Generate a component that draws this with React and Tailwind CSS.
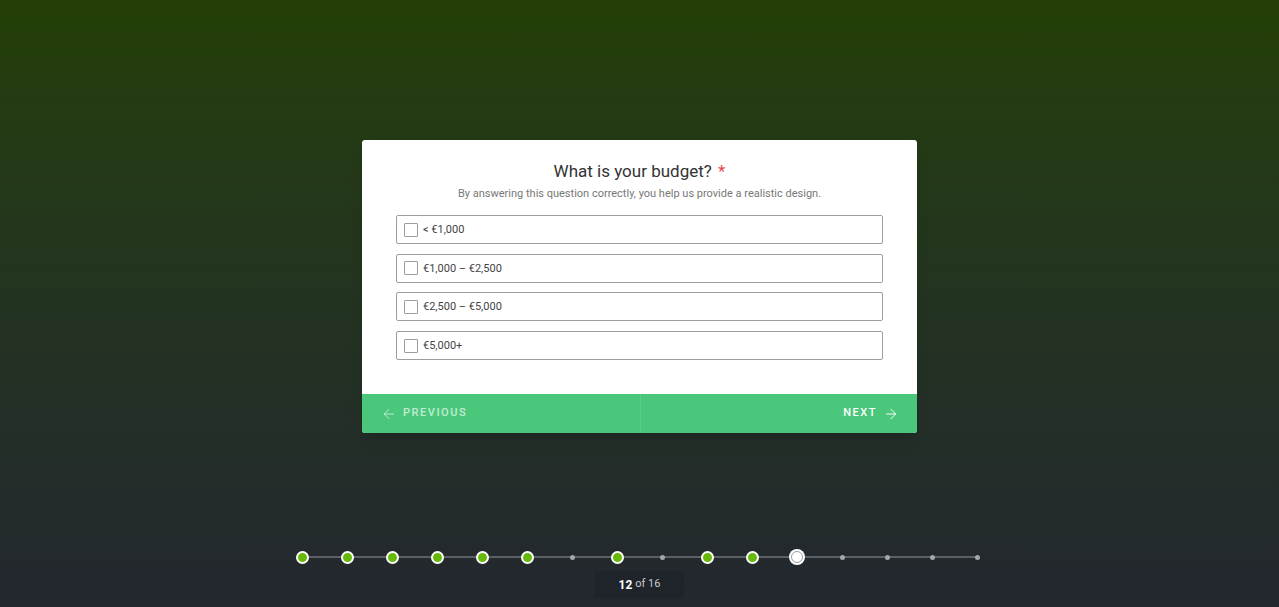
import { ArrowLeft, ArrowRight } from 'lucide-react';

const OPTIONS = ['< €1,000', '€1,000 – €2,500', '€2,500 – €5,000', '€5,000+'];

// 1 = done, 0 = skipped, 2 = current
const STEPS = [1, 1, 1, 1, 1, 1, 0, 1, 0, 1, 1, 2, 0, 0, 0, 0];

function Dot({ state }) {
  if (state === 1) {
    return <div className="w-[13px] h-[13px] rounded-full bg-[#66b908] border-2 border-white" />;
  }
  if (state === 2) {
    return (
      <div className="w-[16px] h-[16px] rounded-full bg-white p-[2px]">
        <div className="w-full h-full rounded-full border border-[#9a9a9a] bg-white" />
      </div>
    );
  }
  return <div className="w-[5px] h-[5px] rounded-full bg-[#a3a6aa]" />;
}

export default function App() {
  return (
    <div
      className="min-h-screen h-[607px] flex flex-col items-center bg-gradient-to-b from-[#243f05] to-[#23272f] overflow-hidden"
      style={{ fontFamily: 'Roboto, "Liberation Sans", sans-serif' }}
    >
      {/* Question card */}
      <div className="mt-[140px] w-[555px] bg-white rounded-[3px] shadow-lg overflow-hidden">
        <div className="px-[34px] pt-[19px] pb-[34px]">
          <h2 className="text-center text-[17px] leading-6 text-[#333]">
            What is your budget? <span className="text-[#e5484d] ml-[2px]">*</span>
          </h2>
          <p className="text-center text-[11px] leading-4 mt-[3px] text-[#777]">
            By answering this question correctly, you help us provide a realistic design.
          </p>
          <div className="mt-[13px] flex flex-col gap-[9.7px]">
            {OPTIONS.map(opt => (
              <label
                key={opt}
                className="h-[29px] flex items-center border border-[#9e9e9e] rounded-[2px] px-[7px] gap-[5px] cursor-pointer"
              >
                <span className="w-[14px] h-[14px] border border-[#9e9e9e] rounded-[1px] bg-white" />
                <span className="text-[11px] leading-4 pt-[1px] text-[#444]">{opt}</span>
              </label>
            ))}
          </div>
        </div>
        <div className="h-[39px] flex bg-[#4ac77b] text-[11px] font-medium tracking-[0.14em]">
          <button className="flex-1 flex items-center gap-[6px] pl-[19px] text-white/65 border-r border-white/10">
            <ArrowLeft size={16} strokeWidth={1.4} />
            PREVIOUS
          </button>
          <button className="flex-1 flex items-center justify-end gap-[6px] pr-[18px] text-white">
            NEXT
            <ArrowRight size={16} strokeWidth={1.4} />
          </button>
        </div>
      </div>

      {/* Progress */}
      <div className="mt-[116px] flex flex-col items-center">
        <div className="relative flex h-[16px]">
          <div className="absolute left-[22px] right-[22px] top-[7px] h-[2px] bg-[#5c6064]" />
          {STEPS.map((s, i) => (
            <div key={i} className="relative w-[45px] flex items-center justify-center">
              <Dot state={s} />
            </div>
          ))}
        </div>
        <div className="mt-[6px] w-[89px] h-[27px] flex items-center justify-center bg-[#1f232a] text-[11px] text-[#c9cbce]">
          <span className="font-bold text-[12px] text-white mr-[3px]">12</span>of 16
        </div>
      </div>
    </div>
  );
}
